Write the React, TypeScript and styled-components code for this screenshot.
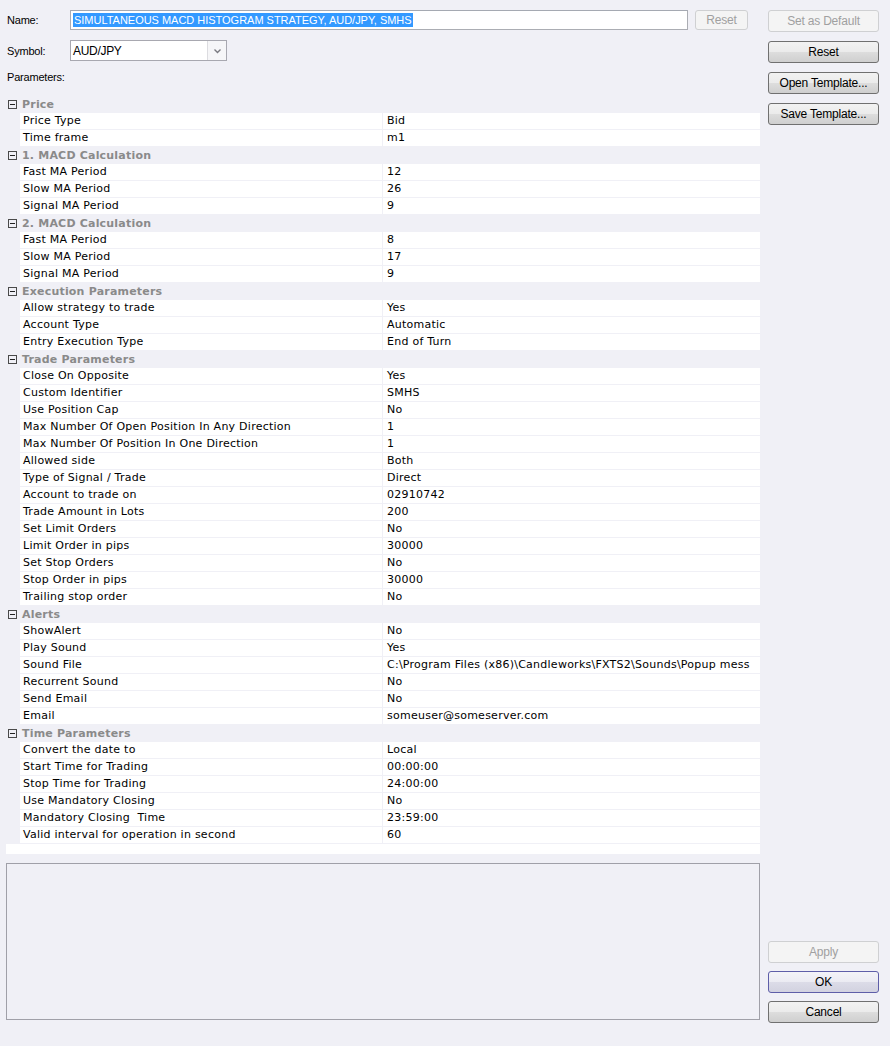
import React from "react";
import styled, { createGlobalStyle } from "styled-components";

const GlobalStyle = createGlobalStyle`
  html, body { margin: 0; padding: 0; background: #f0f0f6; }
  body { font-family: "Liberation Sans", Arial, sans-serif; font-size: 11px; color: #000; }
`;

const Page = styled.div`
  display: flex;
  width: 890px;
  height: 1046px;
  box-sizing: border-box;
  padding: 10px 0 23px 6px;
  background: #f0f0f6;
  overflow: hidden;
`;

const LeftCol = styled.div`
  width: 754px;
  display: flex;
  flex-direction: column;
`;

const RightCol = styled.div`
  width: 111px;
  margin-left: 8px;
  display: flex;
  flex-direction: column;
`;

const ButtonGroup = styled.div<{ $gap: number }>`
  display: flex;
  flex-direction: column;
  gap: ${(p) => p.$gap}px;
  margin-top: ${(p) => (p.$gap === 8 ? "auto" : "0")};
`;

const FieldRow = styled.div<{ $mt?: number }>`
  display: flex;
  align-items: center;
  margin-top: ${(p) => p.$mt ?? 0}px;
`;

const Label = styled.div`
  width: 64px;
  padding-left: 1px;
  box-sizing: border-box;
  font-size: 11px;
  letter-spacing: -0.2px;
  color: #000;
`;

const TextBox = styled.div`
  width: 618px;
  height: 20px;
  box-sizing: border-box;
  border: 1px solid #abadb3;
  border-top-color: #a5a9b2;
  background: #fff;
  display: flex;
  align-items: center;
  padding-left: 2px;
`;

const Selected = styled.span`
  background: #3399ff;
  color: #fff;
  font-size: 11px;
  line-height: 14px;
  letter-spacing: -0.02px;
  padding: 0 1px;
  white-space: nowrap;
`;

const Btn = styled.div<{ $disabled?: boolean; $w?: number; $h?: number }>`
  width: ${(p) => p.$w ?? 111}px;
  height: ${(p) => p.$h ?? 22}px;
  box-sizing: border-box;
  border: 1px solid ${(p) => (p.$disabled ? "#cfd0d2" : "#707070")};
  border-radius: 3px;
  background: ${(p) =>
    p.$disabled
      ? "#f4f4f4"
      : "linear-gradient(#f2f2f2 0%, #ebebeb 50%, #dddddd 51%, #cfcfcf 100%)"};
  color: ${(p) => (p.$disabled ? "#a0a0a0" : "#000")};
  display: flex;
  align-items: center;
  justify-content: center;
  font-size: 12px;
  letter-spacing: -0.2px;
  flex-shrink: 0;
`;

const OkBtn = styled(Btn)`
  background: linear-gradient(#f3f3f8 0%, #ebebf3 50%, #dcdce8 51%, #d2d2e0 100%);
  border-color: #5e5ea8;
`;

const SmallReset = styled(Btn)`
  margin-left: 7px;
`;

const Combo = styled.div`
  width: 157px;
  height: 21px;
  box-sizing: border-box;
  border: 1px solid #a8a8b0;
  background: #fff;
  display: flex;
  align-items: stretch;
`;

const ComboText = styled.div`
  flex: 1;
  display: flex;
  align-items: center;
  padding-left: 2px;
  font-size: 12px;
  letter-spacing: -0.3px;
`;

const ComboArrow = styled.div`
  width: 18px;
  border-left: 1px solid #dcdce0;
  background: #f6f6f8;
  display: flex;
  align-items: center;
  justify-content: center;
`;

const ParamsLabel = styled.div`
  margin: 10px 0 12px 1px;
  height: 13px;
  line-height: 13px;
  font-size: 11px;
  letter-spacing: -0.2px;
`;

const Grid = styled.div`
  height: 758px;
  background: #fff;
  font-family: "DejaVu Sans", Verdana, sans-serif;
  font-size: 11px;
  letter-spacing: 0.25px;
  overflow: hidden;
`;

const CatRow = styled.div`
  height: 17px;
  display: flex;
  align-items: center;
  background: #f0f0f6;
`;

const Toggle = styled.div`
  width: 9px;
  height: 9px;
  box-sizing: border-box;
  border: 1px solid #4a4a4a;
  margin: 0 5px 0 2px;
  position: relative;
  &::after {
    content: "";
    position: absolute;
    left: 1px;
    right: 1px;
    top: 3px;
    height: 1px;
    background: #222;
  }
`;

const CatTitle = styled.div`
  font-weight: bold;
  color: #8a8a8a;
  letter-spacing: 0.2px;
`;

const PropRow = styled.div`
  height: 17px;
  display: grid;
  grid-template-columns: 14px 363px 1fr;
  background: #f0f0f6;
`;

const Gutter = styled.div``;

const NameCell = styled.div`
  background: #fff;
  border-right: 1px solid #f0f0f6;
  border-bottom: 1px solid #f0f0f6;
  padding-left: 3px;
  line-height: 16px;
  white-space: pre;
  overflow: hidden;
`;

const ValueCell = styled.div`
  background: #fff;
  border-bottom: 1px solid #f0f0f6;
  padding-left: 4px;
  line-height: 16px;
  white-space: nowrap;
  overflow: hidden;
`;

const Description = styled.div`
  margin-top: 9px;
  height: 157px;
  box-sizing: border-box;
  border: 1px solid #a0a0a8;
  background: #f0f0f6;
`;

type Section = { title: string; rows: [string, string][] };

const sections: Section[] = [
  { title: "Price", rows: [["Price Type", "Bid"], ["Time frame", "m1"]] },
  {
    title: "1. MACD Calculation",
    rows: [["Fast MA Period", "12"], ["Slow MA Period", "26"], ["Signal MA Period", "9"]],
  },
  {
    title: "2. MACD Calculation",
    rows: [["Fast MA Period", "8"], ["Slow MA Period", "17"], ["Signal MA Period", "9"]],
  },
  {
    title: "Execution Parameters",
    rows: [
      ["Allow strategy to trade", "Yes"],
      ["Account Type", "Automatic"],
      ["Entry Execution Type", "End of Turn"],
    ],
  },
  {
    title: "Trade Parameters",
    rows: [
      ["Close On Opposite", "Yes"],
      ["Custom Identifier", "SMHS"],
      ["Use Position Cap", "No"],
      ["Max Number Of Open Position In Any Direction", "1"],
      ["Max Number Of Position In One Direction", "1"],
      ["Allowed side", "Both"],
      ["Type of Signal / Trade", "Direct"],
      ["Account to trade on", "02910742"],
      ["Trade Amount in Lots", "200"],
      ["Set Limit Orders", "No"],
      ["Limit Order in pips", "30000"],
      ["Set Stop Orders", "No"],
      ["Stop Order in pips", "30000"],
      ["Trailing stop order", "No"],
    ],
  },
  {
    title: "Alerts",
    rows: [
      ["ShowAlert", "No"],
      ["Play Sound", "Yes"],
      ["Sound File", "C:\\Program Files (x86)\\Candleworks\\FXTS2\\Sounds\\Popup mess"],
      ["Recurrent Sound", "No"],
      ["Send Email", "No"],
      ["Email", "someuser@someserver.com"],
    ],
  },
  {
    title: "Time Parameters",
    rows: [
      ["Convert the date to", "Local"],
      ["Start Time for Trading", "00:00:00"],
      ["Stop Time for Trading", "24:00:00"],
      ["Use Mandatory Closing", "No"],
      ["Mandatory Closing  Time", "23:59:00"],
      ["Valid interval for operation in second", "60"],
    ],
  },
];

export default function App() {
  return (
    <>
      <GlobalStyle />
      <Page>
        <LeftCol>
          <FieldRow>
            <Label>Name:</Label>
            <TextBox>
              <Selected>SIMULTANEOUS MACD HISTOGRAM STRATEGY, AUD/JPY, SMHS</Selected>
            </TextBox>
            <SmallReset $disabled $w={53} $h={20}>
              Reset
            </SmallReset>
          </FieldRow>
          <FieldRow $mt={10}>
            <Label>Symbol:</Label>
            <Combo>
              <ComboText>AUD/JPY</ComboText>
              <ComboArrow>
                <svg width="9" height="6" viewBox="0 0 9 6">
                  <path d="M1.5 1.5 L4.5 4.5 L7.5 1.5" fill="none" stroke="#7a7a80" strokeWidth="1.4" />
                </svg>
              </ComboArrow>
            </Combo>
          </FieldRow>
          <ParamsLabel>Parameters:</ParamsLabel>
          <Grid>
            {sections.map((s) => (
              <React.Fragment key={s.title}>
                <CatRow>
                  <Toggle />
                  <CatTitle>{s.title}</CatTitle>
                </CatRow>
                {s.rows.map(([n, v], i) => (
                  <PropRow key={s.title + i}>
                    <Gutter />
                    <NameCell>{n}</NameCell>
                    <ValueCell>{v}</ValueCell>
                  </PropRow>
                ))}
              </React.Fragment>
            ))}
          </Grid>
          <Description />
        </LeftCol>
        <RightCol>
          <ButtonGroup $gap={9}>
            <Btn $disabled>Set as Default</Btn>
            <Btn>Reset</Btn>
            <Btn>Open Template...</Btn>
            <Btn>Save Template...</Btn>
          </ButtonGroup>
          <ButtonGroup $gap={8}>
            <Btn $disabled>Apply</Btn>
            <OkBtn>OK</OkBtn>
            <Btn>Cancel</Btn>
          </ButtonGroup>
        </RightCol>
      </Page>
    </>
  );
}
